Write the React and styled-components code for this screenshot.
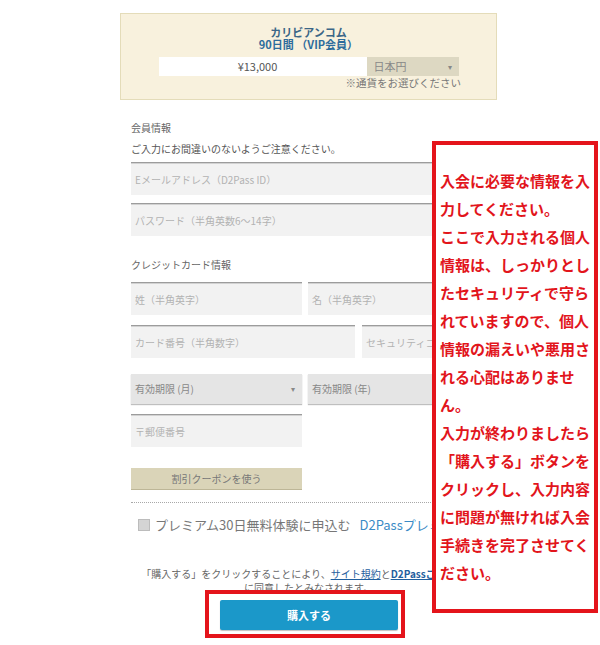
import React from 'react';
import styled, { createGlobalStyle } from 'styled-components';

const GlobalStyle = createGlobalStyle`
  html, body {
    margin: 0;
    padding: 0;
    background: #fff;
  }
  body {
    font-family: "Noto Sans CJK JP", "Noto Sans", sans-serif;
    color: #666;
  }
  * {
    box-sizing: border-box;
  }
`;

const App = () => {
  return (
    <Page>
      <GlobalStyle />
      <Column>
        <PlanCard>
          <PlanName>カリビアンコム</PlanName>
          <PlanTerm>90日間 （VIP会員）</PlanTerm>
          <PriceRow>
            <PriceField>¥13,000</PriceField>
            <CurrencySelect>
              日本円
              <Caret>▾</Caret>
            </CurrencySelect>
          </PriceRow>
          <CurrencyNote>※通貨をお選びください</CurrencyNote>
        </PlanCard>

        <Form>
          <SectionLabel>会員情報</SectionLabel>
          <Hint>ご入力にお間違いのないようご注意ください。</Hint>
          <Field placeholder="Eメールアドレス（D2Pass ID）" />
          <Field placeholder="パスワード（半角英数6～14字）" $gap={8} />

          <SectionLabel $top={22}>クレジットカード情報</SectionLabel>
          <FieldRow $cols="171px 171px" $top={10}>
            <Field placeholder="姓（半角英字）" $gap={0} />
            <Field placeholder="名（半角英字）" $gap={0} />
          </FieldRow>
          <FieldRow $cols="224px 117px" $top={10} $colGap={7}>
            <Field placeholder="カード番号（半角数字）" $gap={0} />
            <Field placeholder="セキュリティコード" $gap={0} />
          </FieldRow>
          <FieldRow $cols="171px 171px" $top={16}>
            <SelectBox>
              有効期限 (月)
              <Caret>▾</Caret>
            </SelectBox>
            <SelectBox>
              有効期限 (年)
              <Caret>▾</Caret>
            </SelectBox>
          </FieldRow>
          <Field placeholder="〒郵便番号" $gap={10} $width={171} />

          <CouponButton type="button">割引クーポンを使う</CouponButton>
          <DottedRule />

          <PremiumRow>
            <CheckBox />
            <span>プレミアム30日無料体験に申込む</span>
            <PremiumLink>D2Passプレミアムとは</PremiumLink>
          </PremiumRow>
        </Form>

        <Terms>
          「購入する」をクリックすることにより、<TermsLink>サイト規約</TermsLink>と<TermsLink $bold>D2Passご利用規約</TermsLink>
          <br />
          に同意したとみなされます。
        </Terms>

        <ButtonFrame>
          <BuyButton type="button">購入する</BuyButton>
        </ButtonFrame>
      </Column>

      <NoteBox>
        <NoteText>入会に必要な情報を入力してください。</NoteText>
        <NoteText>ここで入力される個人情報は、しっかりとしたセキュリティで守られていますので、個人情報の漏えいや悪用される心配はありません。</NoteText>
        <NoteText>入力が終わりましたら「購入する」ボタンをクリックし、入力内容に問題が無ければ入会手続きを完了させてください。</NoteText>
      </NoteBox>
    </Page>
  );
};

const Page = styled.div`
  position: relative;
  width: 600px;
  height: 645px;
  overflow: hidden;
  padding-top: 13px;
`;

const Column = styled.div`
  margin-left: 120px;
  width: 377px;
`;

const PlanCard = styled.div`
  height: 87px;
  border: 1px solid #e4dcb9;
  background: #f8f1dd;
  padding-top: 12px;
  text-align: center;
`;

const PlanName = styled.div`
  font-size: 11px;
  line-height: 12px;
  font-weight: 700;
  color: #3b6687;
`;

const PlanTerm = styled.div`
  font-size: 11px;
  line-height: 12px;
  font-weight: 700;
  color: #2d6c9c;
`;

const PriceRow = styled.div`
  display: flex;
  justify-content: center;
  margin-top: 7px;
  height: 19px;
`;

const PriceField = styled.div`
  width: 208px;
  background: #fff;
  font-size: 11px;
  line-height: 19px;
  color: #555;
  text-align: center;
  padding-right: 10px;
`;

const CurrencySelect = styled.div`
  position: relative;
  width: 92px;
  background: #ddd8c2;
  font-size: 11px;
  line-height: 19px;
  color: #888;
  text-align: left;
  padding-left: 7px;
`;

const Caret = styled.span`
  position: absolute;
  right: 7px;
  top: 0;
  font-size: 8px;
  color: #888;
`;

const CurrencyNote = styled.div`
  width: 340px;
  margin-top: 1px;
  font-size: 10.5px;
  line-height: 12px;
  color: #777;
  text-align: right;
`;

const Form = styled.div`
  padding: 0 18px 0 11px;
`;

const SectionLabel = styled.div`
  margin-top: ${p => p.$top ?? 21}px;
  font-size: 10px;
  line-height: 14px;
  color: #666;
`;

const Hint = styled.div`
  margin-top: 7px;
  font-size: 10px;
  line-height: 14px;
  color: #555;
`;

const Field = styled.input`
  display: block;
  width: ${p => (p.$width ? `${p.$width}px` : '100%')};
  height: 33px;
  margin: ${p => p.$gap ?? 6}px 0 0;
  padding: 0 4px;
  border: none;
  border-top: 1px solid #9c9c9c;
  box-shadow: inset 0 1px 0 #d2d2d2;
  background: #f2f2f2;
  font-family: inherit;
  font-size: 10px;
  color: #555;
  outline: none;

  &::placeholder {
    color: #b3b3b3;
  }
`;

const FieldRow = styled.div`
  display: grid;
  grid-template-columns: ${p => p.$cols};
  column-gap: ${p => p.$colGap ?? 6}px;
  margin-top: ${p => p.$top}px;
`;

const SelectBox = styled.div`
  position: relative;
  height: 30px;
  background: #e5e5e5;
  box-shadow: 0 1px 1px rgba(0, 0, 0, 0.25);
  padding-left: 4px;
  font-size: 10px;
  line-height: 30px;
  color: #888;
`;

const CouponButton = styled.button`
  display: block;
  width: 171px;
  height: 22px;
  margin-top: 21px;
  border: none;
  border-bottom: 1px solid #bdb697;
  background: #dad4b8;
  font-family: inherit;
  font-size: 10px;
  color: #777;
  padding: 0;
`;

const DottedRule = styled.div`
  margin-top: 12px;
  width: 380px;
  border-top: 1px dotted #a8a8a8;
`;

const PremiumRow = styled.div`
  display: flex;
  align-items: center;
  margin-top: 14px;
  padding-left: 7px;
  font-size: 13px;
  line-height: 16px;
  color: #777;
  white-space: nowrap;
`;

const CheckBox = styled.span`
  flex: none;
  width: 12px;
  height: 12px;
  margin-right: 5px;
  background: #d4d4d4;
  border: 1px solid #bcbcbc;
`;

const PremiumLink = styled.span`
  margin-left: 9px;
  color: #3a8bc6;
`;

const Terms = styled.div`
  margin-top: 34px;
  font-size: 10px;
  line-height: 14px;
  color: #666;
  text-align: center;
  white-space: nowrap;
`;

const TermsLink = styled.span`
  color: #1f5e9e;
  text-decoration: underline;
  font-weight: ${p => (p.$bold ? 700 : 400)};
`;

const ButtonFrame = styled.div`
  position: relative;
  width: 200px;
  margin: -5px 0 0 85px;
  border: 4px solid #e4141b;
  padding: 6px 3px 4px 11px;
`;

const BuyButton = styled.button`
  display: block;
  width: 178px;
  height: 30px;
  border: none;
  border-radius: 2px;
  background: #1b98c9;
  box-shadow: 0 1px 1px rgba(0, 0, 0, 0.25);
  font-family: inherit;
  font-size: 11px;
  font-weight: 700;
  color: #fff;
  padding: 0;
`;

const NoteBox = styled.div`
  position: absolute;
  left: 432px;
  top: 141px;
  width: 166px;
  border: 4px solid #e4141b;
  background: #fff;
  padding: 22px 4px 22px 4px;
`;

const NoteText = styled.p`
  margin: 0;
  width: 151px;
  font-size: 15px;
  line-height: 28px;
  font-weight: 700;
  color: #e2151c;
`;

export default App;
